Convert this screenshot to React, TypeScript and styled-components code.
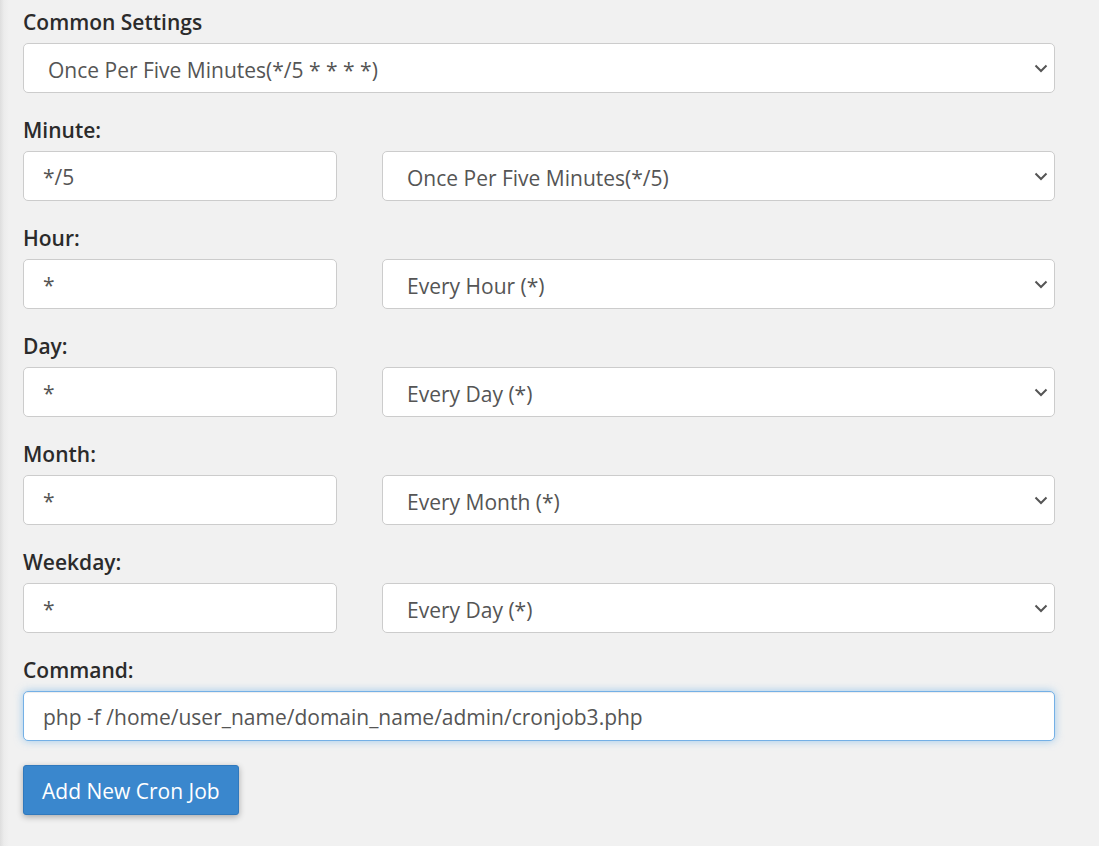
import React from "react";
import styled, { createGlobalStyle, css } from "styled-components";

const GlobalStyle = createGlobalStyle`
  html, body { margin: 0; padding: 0; }
  body {
    background: linear-gradient(to right, #dedede 0px, #ececec 4px, #f1f1f1 9px, #f1f1f1 100%);
    font-family: "Open Sans", "Liberation Sans", sans-serif;
    min-height: 846px;
  }
`;

const Page = styled.div`
  padding: 7px 44px 0 23px;
  width: 1032px;
`;

const Group = styled.div`
  display: flex;
  flex-direction: column;
  margin-bottom: 22px;
`;

const Label = styled.label`
  font-size: 21px;
  font-weight: 600;
  color: #2b2b2b;
  line-height: 31px;
  margin-bottom: 5px;
`;

const Row = styled.div`
  display: grid;
  grid-template-columns: 314px 1fr;
  column-gap: 45px;
`;

const fieldBase = css`
  box-sizing: border-box;
  height: 50px;
  width: 100%;
  background: #fff;
  border: 1px solid #cccccc;
  border-radius: 5px;
  font-family: "Open Sans", "Liberation Sans", sans-serif;
  font-size: 21px;
  color: #555;
  outline: none;
`;

const TextInput = styled.input<{ $focused?: boolean }>`
  ${fieldBase}
  padding: 2px 19px 0;
  ${(p) =>
    p.$focused &&
    css`
      border-color: #74b0e6;
      box-shadow: inset 0 1px 1px rgba(0, 0, 0, 0.075), 0 0 8px rgba(102, 175, 233, 0.6);
    `}
`;

const SelectWrap = styled.div`
  position: relative;
`;

const Select = styled.select`
  ${fieldBase}
  appearance: none;
  -webkit-appearance: none;
  padding: 3px 40px 0 24px;
`;

const Chevron = styled.svg`
  position: absolute;
  right: 7px;
  top: 50%;
  width: 14px;
  height: 9px;
  margin-top: -4px;
  pointer-events: none;
`;

const Button = styled.button`
  box-sizing: border-box;
  height: 50px;
  padding: 1px 18px 0;
  background: #3a87cd;
  color: #fff;
  border: 1px solid #3079bd;
  border-radius: 3px;
  font-family: "Open Sans", "Liberation Sans", sans-serif;
  font-size: 21px;
  box-shadow: 0 2px 6px rgba(0, 0, 0, 0.3);
  cursor: pointer;
`;

const ButtonRow = styled.div`
  padding-top: 2px;
`;

const ChevronIcon = () => (
  <Chevron viewBox="0 0 14 9">
    <path d="M1.5 1.5 L7 7 L12.5 1.5" fill="none" stroke="#555" strokeWidth="2" />
  </Chevron>
);

const SelectField = ({ value }: { value: string }) => (
  <SelectWrap>
    <Select defaultValue={value}>
      <option value={value}>{value}</option>
    </Select>
    <ChevronIcon />
  </SelectWrap>
);

const rows = [
  { label: "Minute:", value: "*/5", option: "Once Per Five Minutes(*/5)" },
  { label: "Hour:", value: "*", option: "Every Hour (*)" },
  { label: "Day:", value: "*", option: "Every Day (*)" },
  { label: "Month:", value: "*", option: "Every Month (*)" },
  { label: "Weekday:", value: "*", option: "Every Day (*)" },
];

export default function App() {
  return (
    <>
      <GlobalStyle />
      <Page>
        <Group>
          <Label>Common Settings</Label>
          <SelectField value="Once Per Five Minutes(*/5 * * * *)" />
        </Group>
        {rows.map((r) => (
          <Group key={r.label}>
            <Label>{r.label}</Label>
            <Row>
              <TextInput defaultValue={r.value} />
              <SelectField value={r.option} />
            </Row>
          </Group>
        ))}
        <Group>
          <Label>Command:</Label>
          <TextInput $focused defaultValue="php -f /home/user_name/domain_name/admin/cronjob3.php" />
        </Group>
        <ButtonRow>
          <Button>Add New Cron Job</Button>
        </ButtonRow>
      </Page>
    </>
  );
}
